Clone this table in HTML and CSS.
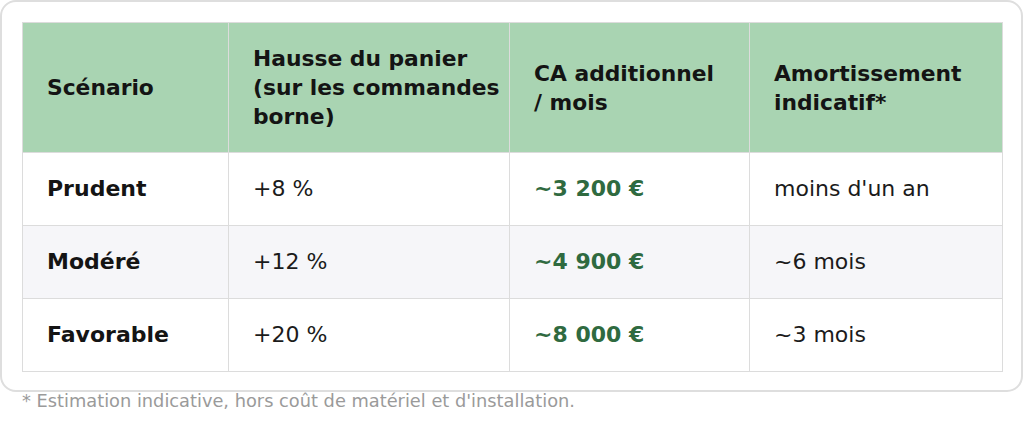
FILE: index.html
```html
<!DOCTYPE html>
<html lang="fr">
<head>
<meta charset="utf-8">
<link rel="stylesheet" href="styles.css">
</head>
<body>
<div class="page">
  <div class="card">
    <table class="roi">
      <colgroup>
        <col class="c1"><col class="c2"><col class="c3"><col class="c4">
      </colgroup>
      <thead>
        <tr>
          <th>Scénario</th>
          <th>Hausse du panier (sur les commandes borne)</th>
          <th class="narrow">CA additionnel / mois</th>
          <th>Amortissement indicatif*</th>
        </tr>
      </thead>
      <tbody>
        <tr>
          <td class="name">Prudent</td>
          <td>+8 %</td>
          <td class="money">~3 200 €</td>
          <td>moins d'un an</td>
        </tr>
        <tr class="alt">
          <td class="name">Modéré</td>
          <td>+12 %</td>
          <td class="money">~4 900 €</td>
          <td>~6 mois</td>
        </tr>
        <tr>
          <td class="name">Favorable</td>
          <td>+20 %</td>
          <td class="money">~8 000 €</td>
          <td>~3 mois</td>
        </tr>
      </tbody>
    </table>
  </div>
  <p class="note">* Estimation indicative, hors coût de matériel et d'installation.</p>
</div>
</body>
</html>
```

FILE: styles.css
```css
html, body {
  margin: 0;
  padding: 0;
  background: #ffffff;
}

body {
  font-family: "DejaVu Sans", "Liberation Sans", sans-serif;
  color: #1b1b1b;
}

.page {
  width: 1023px;
}

.card {
  box-sizing: border-box;
  width: 1023px;
  border: 2px solid #dedede;
  border-radius: 16px;
  padding: 20px 20px 18px 20px;
}

.roi {
  width: 980px;
  border-collapse: collapse;
  table-layout: fixed;
}

.c1 { width: 206px; }
.c2 { width: 281px; }
.c3 { width: 240px; }
.c4 { width: 253px; }

.roi th,
.roi td {
  border: 1px solid #dcdcdc;
  text-align: left;
  vertical-align: middle;
}

.roi th {
  background: #a9d4b2;
  color: #141414;
  font-size: 21.8px;
  font-weight: bold;
  line-height: 29px;
  padding: 21px 4px 21px 24px;
}

.roi th.narrow {
  padding-right: 28px;
}

.roi td {
  font-size: 22px;
  line-height: 32px;
  padding: 20px 12px 20px 24px;
  background: #ffffff;
}

.roi tr.alt td {
  background: #f6f6f9;
}

.roi td.name {
  font-weight: bold;
  color: #141414;
}

.roi td.money {
  font-weight: bold;
  color: #2f6a40;
}

.note {
  margin: 0;
  padding: 0 0 0 22px;
  font-size: 17.8px;
  line-height: 17px;
  color: #9a9a9a;
}
```
